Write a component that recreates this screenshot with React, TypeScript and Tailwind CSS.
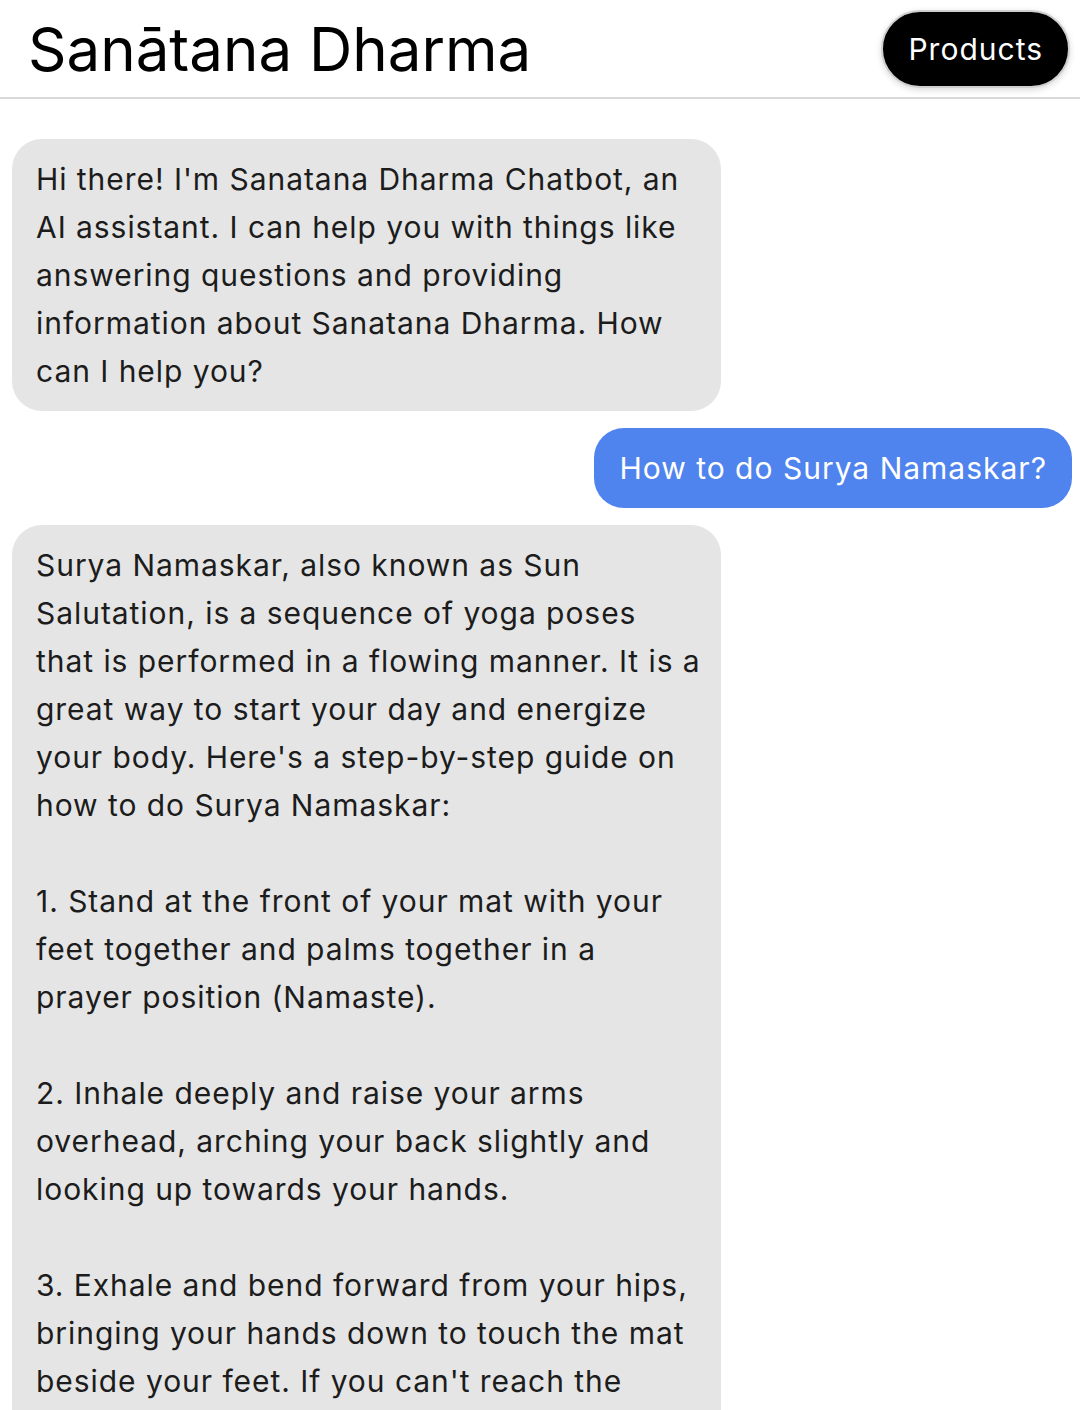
import React from "react";

const first = [
  "Hi there! I'm Sanatana Dharma Chatbot, an",
  "AI assistant. I can help you with things like",
  "answering questions and providing",
  "information about Sanatana Dharma. How",
  "can I help you?",
].join("\n");

const second = [
  "Surya Namaskar, also known as Sun",
  "Salutation, is a sequence of yoga poses",
  "that is performed in a flowing manner. It is a",
  "great way to start your day and energize",
  "your body. Here's a step-by-step guide on",
  "how to do Surya Namaskar:",
  "",
  "1. Stand at the front of your mat with your",
  "feet together and palms together in a",
  "prayer position (Namaste).",
  "",
  "2. Inhale deeply and raise your arms",
  "overhead, arching your back slightly and",
  "looking up towards your hands.",
  "",
  "3. Exhale and bend forward from your hips,",
  "bringing your hands down to touch the mat",
  "beside your feet. If you can't reach the",
  "mat, bend your knees slightly.",
  "",
  "4. Inhale and step your right leg back into a",
  "lunge position.",
].join("\n");

function Bot({ text }: { text: string }) {
  return (
    <div className="flex justify-start">
      <div className="w-[709px] overflow-hidden whitespace-pre rounded-[30px] bg-[#e5e5e5] px-6 py-4 text-[30px] leading-[48px] tracking-[0.95px] text-[#1c1c1c]">
        {text}
      </div>
    </div>
  );
}

export default function App() {
  return (
    <div
      className="h-[1410px] w-[1080px] overflow-hidden bg-white"
      style={{ fontFamily: "Inter, 'Noto Sans', sans-serif" }}
    >
      <header className="flex h-[99px] items-center justify-between border-b-2 border-[#d9d9d9] pl-[28px] pr-[10px]">
        <h1 className="text-[60px] leading-none font-normal text-black">
          Sanātana Dharma
        </h1>
        <button className="flex h-[78px] items-center rounded-full border-2 border-[#cfcfcf] bg-black px-[25px] text-[30px] leading-[48px] tracking-[1px] text-white shadow-[0_2px_6px_rgba(0,0,0,0.15)]">
          Products
        </button>
      </header>
      <main className="flex flex-col gap-[17px] pl-3 pr-[8px] pt-[40px]">
        <Bot text={first} />
        <div className="flex justify-end">
          <div className="rounded-[30px] bg-[#4f83ee] px-[25px] py-4 text-[30px] leading-[48px] tracking-[1px] text-white">
            How to do Surya Namaskar?
          </div>
        </div>
        <Bot text={second} />
      </main>
    </div>
  );
}
